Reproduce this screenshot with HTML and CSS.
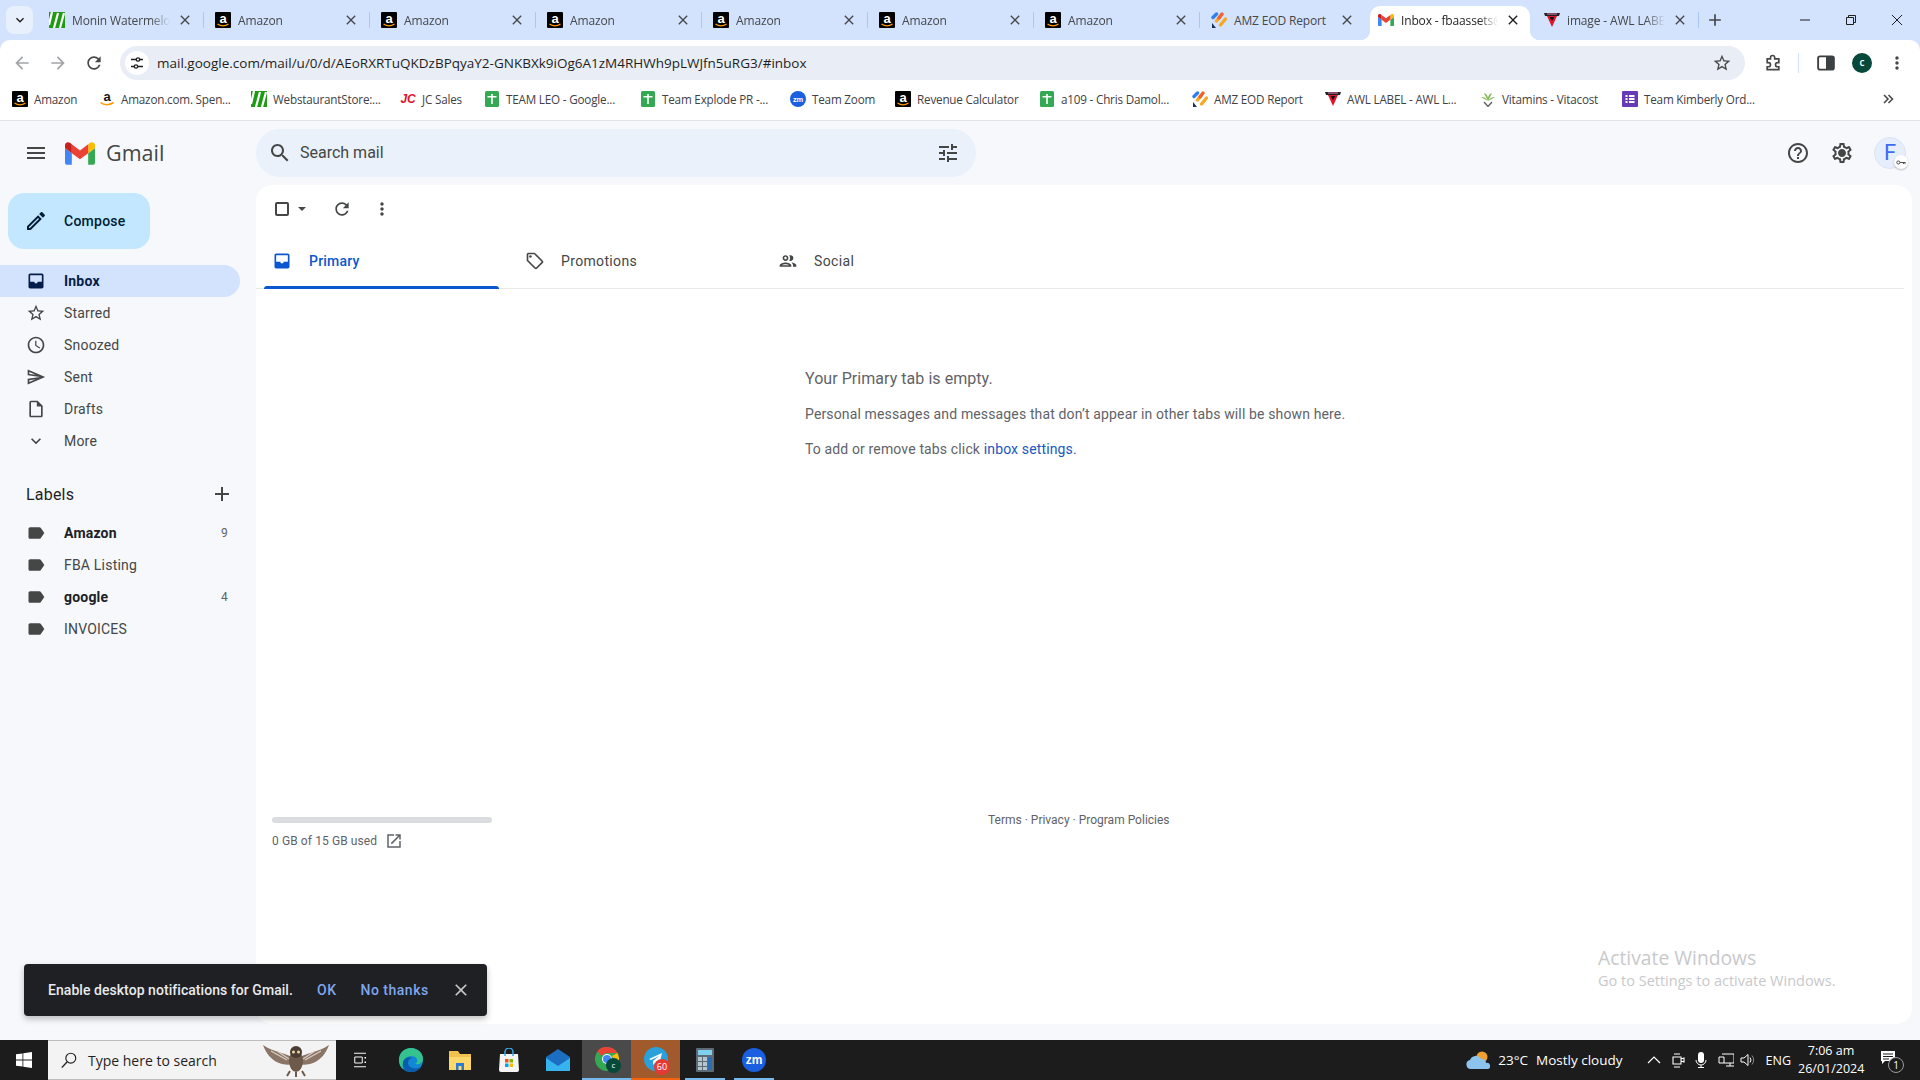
FILE: index.html
```html
<!DOCTYPE html>
<html lang="en">
<head>
    <meta charset="UTF-8">
    <meta name="viewport" content="width=device-width, initial-scale=1.0">
    <title>Inbox - Gmail</title>
    <link rel="stylesheet" href="styles.css">
</head>
<body>
    <!-- icon sprite -->
    <svg class="sprite" xmlns="http://www.w3.org/2000/svg">
        <symbol id="i-menu" viewBox="0 0 24 24"><path d="M3 18h18v-2H3v2zm0-5h18v-2H3v2zm0-7v2h18V6H3z"/></symbol>
        <symbol id="i-search" viewBox="0 0 24 24"><path d="M15.5 14h-.79l-.28-.27C15.41 12.59 16 11.11 16 9.5 16 5.91 13.09 3 9.5 3S3 5.91 3 9.5 5.91 16 9.5 16c1.61 0 3.09-.59 4.23-1.57l.27.28v.79l5 4.99L20.49 19l-4.99-5zm-6 0C7.01 14 5 11.99 5 9.5S7.01 5 9.5 5 14 7.01 14 9.5 11.99 14 9.5 14z"/></symbol>
        <symbol id="i-tune" viewBox="0 0 24 24"><path d="M3 17v2h6v-2H3zM3 5v2h10V5H3zm10 16v-2h8v-2h-8v-2h-2v6h2zM7 9v2H3v2h4v2h2V9H7zm14 4v-2H11v2h10zm-6-4h2V7h4V5h-4V3h-2v6z"/></symbol>
        <symbol id="i-help" viewBox="0 0 24 24"><path d="M11 18h2v-2h-2v2zm1-16C6.48 2 2 6.48 2 12s4.48 10 10 10 10-4.48 10-10S17.52 2 12 2zm0 18c-4.41 0-8-3.59-8-8s3.59-8 8-8 8 3.59 8 8-3.59 8-8 8zm0-14c-2.21 0-4 1.79-4 4h2c0-1.1.9-2 2-2s2 .9 2 2c0 2-3 1.75-3 5h2c0-2.25 3-2.5 3-5 0-2.21-1.79-4-4-4z"/></symbol>
        <symbol id="i-gear" viewBox="0 0 24 24"><path d="M19.43 12.98c.04-.32.07-.64.07-.98 0-.34-.03-.66-.07-.98l2.11-1.65c.19-.15.24-.42.12-.64l-2-3.46c-.09-.16-.26-.25-.44-.25-.06 0-.12.01-.17.03l-2.49 1c-.52-.4-1.08-.73-1.69-.98l-.38-2.65C14.46 2.18 14.25 2 14 2h-4c-.25 0-.46.18-.49.42l-.38 2.65c-.61.25-1.17.59-1.69.98l-2.49-1c-.06-.02-.12-.03-.18-.03-.17 0-.34.09-.43.25l-2 3.46c-.13.22-.07.49.12.64l2.11 1.65c-.04.32-.07.65-.07.98 0 .33.03.66.07.98l-2.11 1.65c-.19.15-.24.42-.12.64l2 3.46c.09.16.26.25.44.25.06 0 .12-.01.17-.03l2.49-1c.52.4 1.08.73 1.69.98l.38 2.65c.03.24.24.42.49.42h4c.25 0 .46-.18.49-.42l.38-2.65c.61-.25 1.17-.59 1.69-.98l2.49 1c.06.02.12.03.18.03.17 0 .34-.09.43-.25l2-3.46c.12-.22.07-.49-.12-.64l-2.11-1.65zm-1.98-1.71c.04.31.05.52.05.73 0 .21-.02.43-.05.73l-.14 1.13.89.7 1.08.84-.7 1.21-1.27-.51-1.04-.42-.9.68c-.43.32-.84.56-1.25.73l-1.06.43-.16 1.13-.2 1.35h-1.4l-.19-1.35-.16-1.13-1.06-.43c-.43-.18-.83-.41-1.23-.71l-.91-.7-1.06.43-1.27.51-.7-1.21 1.08-.84.89-.7-.14-1.13c-.03-.31-.05-.54-.05-.74s.02-.43.05-.73l.14-1.13-.89-.7-1.08-.84.7-1.21 1.27.51 1.04.42.9-.68c.43-.32.84-.56 1.25-.73l1.06-.43.16-1.13.2-1.35h1.39l.19 1.35.16 1.13 1.06.43c.43.18.83.41 1.23.71l.91.7 1.06-.43 1.27-.51.7 1.21-1.07.85-.89.7.14 1.13zM12 8c-2.21 0-4 1.79-4 4s1.79 4 4 4 4-1.79 4-4-1.79-4-4-4z"/></symbol>
        <symbol id="i-refresh" viewBox="0 0 24 24"><path d="M17.65 6.35C16.2 4.9 14.21 4 12 4c-4.42 0-7.99 3.58-7.99 8s3.57 8 7.99 8c3.73 0 6.84-2.55 7.73-6h-2.08c-.82 2.33-3.04 4-5.65 4-3.31 0-6-2.69-6-6s2.69-6 6-6c1.66 0 3.14.69 4.22 1.78L13 11h7V4l-2.35 2.35z"/></symbol>
        <symbol id="i-dots" viewBox="0 0 24 24"><path d="M12 8c1.1 0 2-.9 2-2s-.9-2-2-2-2 .9-2 2 .9 2 2 2zm0 2c-1.1 0-2 .9-2 2s.9 2 2 2 2-.9 2-2-.9-2-2-2zm0 6c-1.1 0-2 .9-2 2s.9 2 2 2 2-.9 2-2-.9-2-2-2z"/></symbol>
        <symbol id="i-inbox" viewBox="0 0 24 24"><path d="M19 3H5c-1.1 0-2 .9-2 2v14c0 1.1.9 2 2 2h14c1.1 0 2-.9 2-2V5c0-1.1-.9-2-2-2zm0 2v8h-5c0 1.1-.9 2-2 2s-2-.9-2-2H5V5h14z"/></symbol>
        <symbol id="i-star" viewBox="0 0 24 24"><path d="M22 9.24l-7.19-.62L12 2 9.19 8.63 2 9.24l5.46 4.73L5.82 21 12 17.27 18.18 21l-1.63-7.03L22 9.24zM12 15.4l-3.76 2.27 1-4.28-3.32-2.88 4.38-.38L12 6.1l1.71 4.04 4.38.38-3.32 2.88 1 4.28L12 15.4z"/></symbol>
        <symbol id="i-clock" viewBox="0 0 24 24"><path d="M11.99 2C6.47 2 2 6.48 2 12s4.47 10 9.99 10C17.52 22 22 17.52 22 12S17.52 2 11.99 2zM12 20c-4.42 0-8-3.58-8-8s3.58-8 8-8 8 3.58 8 8-3.58 8-8 8zm.5-13H11v6l5.25 3.15.75-1.23-4.5-2.67z"/></symbol>
        <symbol id="i-send" viewBox="0 0 24 24"><path d="M4.01 6.03l7.51 3.22-7.52-1 .01-2.22m7.5 8.72L4 17.97v-2.22l7.51-1M2.01 3L2 10l15 2-15 2 .01 7L23 12 2.01 3z"/></symbol>
        <symbol id="i-draft" viewBox="0 0 24 24"><path d="M14 2H6c-1.1 0-1.99.9-1.99 2L4 20c0 1.1.89 2 1.99 2H18c1.1 0 2-.9 2-2V8l-6-6zM6 20V4h7v5h5v11H6z"/></symbol>
        <symbol id="i-expand" viewBox="0 0 24 24"><path d="M16.59 8.59L12 13.17 7.41 8.59 6 10l6 6 6-6z"/></symbol>
        <symbol id="i-label" viewBox="0 0 24 24"><path d="M17.63 5.84C17.27 5.33 16.67 5 16 5L5 5.01C3.9 5.01 3 5.9 3 7v10c0 1.1.9 1.99 2 1.99L16 19c.67 0 1.27-.33 1.63-.84L22 12l-4.37-6.16z"/></symbol>
        <symbol id="i-add" viewBox="0 0 24 24"><path d="M19 13h-6v6h-2v-6H5v-2h6V5h2v6h6v2z"/></symbol>
        <symbol id="i-edit" viewBox="0 0 24 24"><path d="M3 17.25V21h3.75L17.81 9.94l-3.75-3.75L3 17.25zM5.92 19H5v-.92l9.06-9.06.92.92L5.92 19zM20.71 7.04c.39-.39.39-1.02 0-1.41l-2.34-2.34c-.2-.2-.45-.29-.71-.29s-.51.1-.7.29l-1.83 1.83 3.75 3.75 1.83-1.83z"/></symbol>
        <symbol id="i-tag" viewBox="0 0 24 24"><path d="M21.41 11.58l-9-9C12.05 2.22 11.55 2 11 2H4c-1.1 0-2 .9-2 2v7c0 .55.22 1.05.59 1.42l9 9c.36.36.86.58 1.41.58s1.05-.22 1.41-.59l7-7c.37-.36.59-.86.59-1.41s-.23-1.06-.59-1.42zM13 20.01L4 11V4h7v-.01l9 9-7 7.02z"/><circle cx="6.5" cy="6.5" r="1.5"/></symbol>
        <symbol id="i-people" viewBox="0 0 24 24"><path d="M9 13.75c-2.34 0-7 1.17-7 3.5V19h14v-1.75c0-2.33-4.66-3.5-7-3.5zM4.34 17c.84-.58 2.87-1.25 4.66-1.25s3.82.67 4.66 1.25H4.34zM9 12c1.93 0 3.5-1.57 3.5-3.5S10.93 5 9 5 5.5 6.57 5.5 8.5 7.07 12 9 12zm0-5c.83 0 1.5.67 1.5 1.5S9.83 10 9 10s-1.5-.67-1.5-1.5S8.17 7 9 7zm7.04 6.81c1.16.84 1.96 1.96 1.96 3.44V19h4v-1.75c0-2.02-3.5-3.17-5.96-3.44zM15 12c1.93 0 3.5-1.57 3.5-3.5S16.93 5 15 5c-.54 0-1.04.13-1.5.35.63.89 1 1.98 1 3.15s-.37 2.26-1 3.15c.46.22.96.35 1.5.35z"/></symbol>
        <symbol id="i-open" viewBox="0 0 24 24"><path d="M19 19H5V5h7V3H3v18h18v-9h-2v7zM14 3v2h3.59l-9.83 9.83 1.41 1.41L19 6.41V10h2V3h-7z"/></symbol>
        <symbol id="i-close" viewBox="0 0 24 24"><path d="M19 6.41L17.59 5 12 10.59 6.41 5 5 6.41 10.59 12 5 17.59 6.41 19 12 13.41 17.59 19 19 17.59 13.41 12z"/></symbol>
        <symbol id="i-back" viewBox="0 0 24 24"><path d="M20 11H7.83l5.59-5.59L12 4l-8 8 8 8 1.41-1.41L7.83 13H20v-2z"/></symbol>
        <symbol id="i-forward" viewBox="0 0 24 24"><path d="M12 4l-1.41 1.41L16.17 11H4v2h12.17l-5.58 5.59L12 20l8-8z"/></symbol>
        <symbol id="i-puzzle" viewBox="0 0 24 24"><path fill="none" stroke="currentColor" stroke-width="2" d="M5 7h4V5.5a2.5 2.5 0 0 1 5 0V7h5v4.5h-1.5a2.5 2.5 0 0 0 0 5H19V20H5v-3.5h1.5a2.5 2.5 0 0 0 0-5H5z"/></symbol>
        <symbol id="f-amazon" viewBox="0 0 16 16"><rect width="16" height="16" rx="1" fill="#000"/><text x="8" y="10.5" text-anchor="middle" class="fav-text" font-size="13" font-weight="700" fill="#fff">a</text><path d="M2.5 12c3.5 2.3 7.5 2.3 11 0" fill="none" stroke="#f90" stroke-width="1.3"/></symbol>
        <symbol id="f-amazon2" viewBox="0 0 16 16"><text x="8" y="10" text-anchor="middle" class="fav-text" font-size="13" font-weight="700" fill="#111">a</text><path d="M1.5 11.5c3.5 3 9 3 13 0" fill="none" stroke="#f90" stroke-width="1.6"/></symbol>
        <symbol id="f-web" viewBox="0 0 16 16"><rect width="16" height="16" fill="#1f9a15"/><path d="M0 13L3 0M5 16L9 1M11 16L15 1" fill="none" stroke="#fff" stroke-width="2.2"/></symbol>
        <symbol id="f-jc" viewBox="0 0 16 16"><text x="8" y="12" text-anchor="middle" class="fav-text" font-size="12" font-weight="700" font-style="italic" fill="#e0142a">JC</text></symbol>
        <symbol id="f-sheet" viewBox="0 0 16 16"><rect x="1" width="14" height="16" rx="1.5" fill="#34a853"/><path d="M3.5 5h9v1.5H8.8V13H7.2V6.5H3.500zM7.2 3h1.600v2H7.2z" fill="#fff"/></symbol>
        <symbol id="f-zoom" viewBox="0 0 16 16"><circle cx="8" cy="8" r="8" fill="#1a5fe0"/><text x="8" y="10.5" text-anchor="middle" class="fav-text" font-size="7.5" font-weight="700" fill="#fff">zm</text></symbol>
        <symbol id="f-eod" viewBox="0 0 16 16"><path d="M5.5 9L9 4.500M9.5 13l5-6" stroke="#f9a825" stroke-width="3.4" stroke-linecap="round"/><path d="M8 6l3-4" stroke="#f2622e" stroke-width="3.4" stroke-linecap="round"/><path d="M2 5.5L5.5 2" stroke="#2f80ed" stroke-width="3.4" stroke-linecap="round"/><path d="M1 16v-5l4 5z" fill="#16325c"/></symbol>
        <symbol id="f-awl" viewBox="0 0 16 16"><path d="M0 1h16l-1 3H1z" fill="#222"/><path d="M3 4h10l-5 11z" fill="#e3142c"/><path d="M5.5 5h5L8 9z" fill="#111"/><path d="M3 1.5h10v1H3z" fill="#e87bb0"/></symbol>
        <symbol id="f-vita" viewBox="0 0 16 16"><path d="M8 10L4 2c3 1 4.5 4 4 8zm0 0l4-8c-3 1-4.5 4-4 8zm0 0L1 6c2.5-.5 5 1 7 4zm0 0l7-4c-2.5-.5-5 1-7 4z" fill="#7ab648"/><path d="M4 11l4 4.5 4-4.5" fill="none" stroke="#555" stroke-width="1.2"/></symbol>
        <symbol id="f-forms" viewBox="0 0 16 16"><rect width="16" height="16" rx="1" fill="#673ab7"/><path d="M3.5 4h2v2h-2zM7 4h5.5v2H7zM3.5 7h2v2h-2zM7 7h5.5v2H7zM3.5 10h2v2h-2zM7 10h5.5v2H7z" fill="#fff"/></symbol>
        <symbol id="f-gmail" viewBox="52 42 88 66">
            <path fill="#4285f4" d="M58 108h14V74L52 59v43c0 3.32 2.69 6 6 6"/>
            <path fill="#34a853" d="M120 108h14c3.32 0 6-2.69 6-6V59l-20 15"/>
            <path fill="#fbbc04" d="M120 48v26l20-15v-8c0-7.42-8.47-11.65-14.4-7.2"/>
            <path fill="#ea4335" d="M72 74V48l24 18 24-18v26L96 92"/>
            <path fill="#c5221f" d="M52 51v8l20 15V48l-5.6-4.2c-5.94-4.45-14.4-.22-14.4 7.2"/>
        </symbol>
    </svg>

    <!-- browser tabs -->
    <div class="tabstrip">
        <button class="tab-search" type="button"><svg class="ic12" viewBox="0 0 24 24"><use href="#i-expand"/></svg></button>
        <div class="tab"><div class="tab-inner"><svg class="fav"><use href="#f-web"/></svg><span class="tab-title">Monin Watermelo</span><svg class="tab-x"><use href="#i-close"/></svg></div></div>
        <div class="tab"><div class="tab-inner"><svg class="fav"><use href="#f-amazon"/></svg><span class="tab-title">Amazon</span><svg class="tab-x"><use href="#i-close"/></svg></div></div>
        <div class="tab"><div class="tab-inner"><svg class="fav"><use href="#f-amazon"/></svg><span class="tab-title">Amazon</span><svg class="tab-x"><use href="#i-close"/></svg></div></div>
        <div class="tab"><div class="tab-inner"><svg class="fav"><use href="#f-amazon"/></svg><span class="tab-title">Amazon</span><svg class="tab-x"><use href="#i-close"/></svg></div></div>
        <div class="tab"><div class="tab-inner"><svg class="fav"><use href="#f-amazon"/></svg><span class="tab-title">Amazon</span><svg class="tab-x"><use href="#i-close"/></svg></div></div>
        <div class="tab"><div class="tab-inner"><svg class="fav"><use href="#f-amazon"/></svg><span class="tab-title">Amazon</span><svg class="tab-x"><use href="#i-close"/></svg></div></div>
        <div class="tab"><div class="tab-inner"><svg class="fav"><use href="#f-amazon"/></svg><span class="tab-title">Amazon</span><svg class="tab-x"><use href="#i-close"/></svg></div></div>
        <div class="tab tab-prev"><div class="tab-inner"><svg class="fav"><use href="#f-eod"/></svg><span class="tab-title tab-title-full">AMZ EOD Report</span><svg class="tab-x"><use href="#i-close"/></svg></div></div>
        <div class="tab tab-active"><div class="tab-inner"><svg class="fav"><use href="#f-gmail"/></svg><span class="tab-title">Inbox - fbaassets@</span><svg class="tab-x"><use href="#i-close"/></svg></div></div>
        <div class="tab"><div class="tab-inner"><svg class="fav"><use href="#f-awl"/></svg><span class="tab-title">image - AWL LABE</span><svg class="tab-x"><use href="#i-close"/></svg></div></div>
        <svg class="new-tab" viewBox="0 0 24 24"><use href="#i-add"/></svg>
        <div class="win-controls">
            <svg class="win-btn" viewBox="0 0 12 12"><path d="M1 6h10"/></svg>
            <svg class="win-btn" viewBox="0 0 12 12"><path d="M1.5 3.5h7v7h-7zM3.5 3.5v-2h7v7h-2"/></svg>
            <svg class="win-btn" viewBox="0 0 12 12"><path d="M1 1l10 10M11 1L1 11"/></svg>
        </div>
    </div>

    <!-- address bar -->
    <div class="toolbar">
        <svg class="tool-ic tool-dim"><use href="#i-back"/></svg>
        <svg class="tool-ic tool-dim"><use href="#i-forward"/></svg>
        <svg class="tool-ic"><use href="#i-refresh"/></svg>
        <div class="omnibox">
            <span class="site-info"><svg viewBox="0 0 16 16" class="site-ic"><path d="M2 4.5h5M10.500 4.5h3.5M2 11.5h3.5M9 11.5h5" fill="none" stroke="#1f1f1f" stroke-width="1.5"/><circle cx="9" cy="4.5" r="1.7" fill="none" stroke="#1f1f1f" stroke-width="1.3"/><circle cx="7" cy="11.5" r="1.7" fill="none" stroke="#1f1f1f" stroke-width="1.3"/></svg></span>
            <span class="url">mail.google.com/mail/u/0/d/AEoRXRTuQKDzBPqyaY2-GNKBXk9iOg6A1zM4RHWh9pLWJfn5uRG3/#inbox</span>
            <svg class="tool-ic star"><use href="#i-star"/></svg>
        </div>
        <svg class="tool-ic ext"><use href="#i-puzzle"/></svg>
        <span class="tool-sep"></span>
        <svg class="side-panel" viewBox="0 0 16 16"><rect x="1.7" y="2.7" width="12.6" height="10.6" rx="1.5" fill="none" stroke="#3c4043" stroke-width="1.5"/><rect x="8" y="2.7" width="6" height="10.6" fill="#3c4043"/></svg>
        <span class="chrome-avatar">c</span>
        <svg class="tool-ic"><use href="#i-dots"/></svg>
    </div>

    <!-- bookmarks bar -->
    <div class="bookmarks">
        <div class="bm"><svg class="fav"><use href="#f-amazon"/></svg>Amazon</div>
        <div class="bm"><svg class="fav"><use href="#f-amazon2"/></svg>Amazon.com. Spen...</div>
        <div class="bm"><svg class="fav"><use href="#f-web"/></svg>WebstaurantStore:...</div>
        <div class="bm"><svg class="fav"><use href="#f-jc"/></svg>JC Sales</div>
        <div class="bm"><svg class="fav"><use href="#f-sheet"/></svg>TEAM LEO - Google...</div>
        <div class="bm"><svg class="fav"><use href="#f-sheet"/></svg>Team Explode PR -...</div>
        <div class="bm"><svg class="fav"><use href="#f-zoom"/></svg>Team Zoom</div>
        <div class="bm"><svg class="fav"><use href="#f-amazon"/></svg>Revenue Calculator</div>
        <div class="bm"><svg class="fav"><use href="#f-sheet"/></svg>a109 - Chris Damol...</div>
        <div class="bm"><svg class="fav"><use href="#f-eod"/></svg>AMZ EOD Report</div>
        <div class="bm"><svg class="fav"><use href="#f-awl"/></svg>AWL LABEL - AWL L...</div>
        <div class="bm"><svg class="fav"><use href="#f-vita"/></svg>Vitamins - Vitacost</div>
        <div class="bm"><svg class="fav"><use href="#f-forms"/></svg>Team Kimberly Ord...</div>
        <svg class="bm-more" viewBox="0 0 12 12"><path d="M2 2l4 4-4 4M6.5 2l4 4-4 4" fill="none" stroke="#444" stroke-width="1.5"/></svg>
    </div>

    <!-- gmail -->
    <div class="gmail">
        <aside class="sidebar">
            <div class="brand">
                <svg class="ic24 grey"><use href="#i-menu"/></svg>
                <svg class="gmail-logo"><use href="#f-gmail"/></svg>
                <span class="brand-name">Gmail</span>
            </div>
            <div class="compose"><svg class="ic24 dark"><use href="#i-edit"/></svg>Compose</div>

            <nav class="nav">
                <div class="nav-row nav-current"><svg class="ic20"><use href="#i-inbox"/></svg>Inbox</div>
                <div class="nav-row"><svg class="ic20"><use href="#i-star"/></svg>Starred</div>
                <div class="nav-row"><svg class="ic20"><use href="#i-clock"/></svg>Snoozed</div>
                <div class="nav-row"><svg class="ic20"><use href="#i-send"/></svg>Sent</div>
                <div class="nav-row"><svg class="ic20"><use href="#i-draft"/></svg>Drafts</div>
                <div class="nav-row"><svg class="ic20"><use href="#i-expand"/></svg>More</div>
            </nav>

            <div class="labels-head"><span>Labels</span><svg class="ic20"><use href="#i-add"/></svg></div>
            <div class="nav-row nav-unread"><svg class="ic20"><use href="#i-label"/></svg>Amazon<span class="count">9</span></div>
            <div class="nav-row"><svg class="ic20"><use href="#i-label"/></svg>FBA Listing</div>
            <div class="nav-row nav-unread"><svg class="ic20"><use href="#i-label"/></svg>google<span class="count">4</span></div>
            <div class="nav-row"><svg class="ic20"><use href="#i-label"/></svg>INVOICES</div>
        </aside>

        <div class="content">
            <header class="topbar">
                <div class="searchbox">
                    <svg class="ic24 grey"><use href="#i-search"/></svg>
                    <span class="search-text">Search mail</span>
                    <svg class="ic24 grey tune"><use href="#i-tune"/></svg>
                </div>
                <div class="top-icons">
                    <svg class="ic24 grey"><use href="#i-help"/></svg>
                    <svg class="ic24 grey"><use href="#i-gear"/></svg>
                    <div class="avatar">F<span class="avatar-key"><svg viewBox="0 0 14 8" class="key"><circle cx="3" cy="4" r="2" fill="none" stroke="#444" stroke-width="1.2"/><path d="M5 4h7M9.5 4v2M11.5 4v2" stroke="#444" stroke-width="1.2"/></svg></span></div>
                </div>
            </header>

            <main class="panel">
                <div class="mail-tools">
                    <span class="checkbox"></span>
                    <span class="caret"></span>
                    <svg class="ic20 refresh"><use href="#i-refresh"/></svg>
                    <svg class="ic20 more"><use href="#i-dots"/></svg>
                </div>

                <div class="mail-tabs">
                    <div class="mail-tab mail-tab-on"><svg class="ic20"><use href="#i-inbox"/></svg>Primary</div>
                    <div class="mail-tab"><svg class="ic20"><use href="#i-tag"/></svg>Promotions</div>
                    <div class="mail-tab"><svg class="ic20"><use href="#i-people"/></svg>Social</div>
                </div>

                <section class="empty">
                    <p class="empty-title">Your Primary tab is empty.</p>
                    <p class="empty-line">Personal messages and messages that don’t appear in other tabs will be shown here.</p>
                    <p class="empty-line">To add or remove tabs click <span class="link">inbox settings.</span></p>
                </section>

                <footer class="panel-foot">
                    <div class="storage">
                        <div class="storage-bar"></div>
                        <div class="storage-text">0 GB of 15 GB used <svg class="ic16"><use href="#i-open"/></svg></div>
                    </div>
                    <div class="policies">Terms · Privacy · Program Policies</div>
                </footer>
            </main>
        </div>

        <div class="snackbar">
            <span class="snack-msg">Enable desktop notifications for Gmail.</span>
            <span class="snack-btn">OK</span>
            <span class="snack-btn">No thanks</span>
            <svg class="snack-x"><use href="#i-close"/></svg>
        </div>

        <div class="watermark">
            <div class="wm-title">Activate Windows</div>
            <div class="wm-sub">Go to Settings to activate Windows.</div>
        </div>
    </div>

    <!-- windows taskbar -->
    <div class="taskbar">
        <svg class="start" viewBox="0 0 16 16"><path d="M0 2.3l6.5-.9v6.200H0zM7.3 1.300L16 0v7.600H7.3zM0 8.400h6.500v6.200L0 13.700zM7.3 8.400H16V16l-8.700-1.300z" fill="#fff"/></svg>
        <div class="win-search">
            <svg class="win-search-ic" viewBox="0 0 20 20"><circle cx="12" cy="8" r="5.5" fill="none" stroke="#222" stroke-width="1.3"/><path d="M8 12l-6 6.5" stroke="#222" stroke-width="1.5"/></svg>
            <span>Type here to search</span>
            <svg class="owl" viewBox="0 0 66 34">
                <path d="M33 16C24 10 12 10 0 2c3 8 8 15 16 18 5 2 10 2 14 1z" fill="#8a7566"/>
                <path d="M33 16c9-6 21-6 33-14-3 8-8 15-16 18-5 2-10 2-14 1z" fill="#8a7566"/>
                <path d="M8 8l16 9M14 8l12 8M58 8l-16 9M52 8l-12 8" stroke="#d8cfc6" stroke-width="1.2"/>
                <ellipse cx="33" cy="18" rx="7" ry="11" fill="#6e5a4a"/>
                <circle cx="33" cy="9" r="6" fill="#4a3d33"/>
                <circle cx="30.5" cy="9" r="1.5" fill="#e8d9a0"/>
                <circle cx="35.5" cy="9" r="1.5" fill="#e8d9a0"/>
                <path d="M27 28l-3 5M33 29v5M39 28l3 5" stroke="#6e5a4a" stroke-width="2"/>
            </svg>
        </div>

        <div class="task-apps">
            <div class="app app-view"><svg class="app-ic" viewBox="0 0 24 24"><path d="M4 3h16M4 21h16M5 8h10v8H5z" fill="none" stroke="#fff" stroke-width="1.3"/><path d="M18 8h2v2h-2zM18 14h2v2h-2z" fill="#fff"/></svg></div>
            <div class="app"><svg class="app-ic" viewBox="0 0 24 24"><circle cx="12" cy="12" r="12" fill="#1287d4"/><path d="M12 0c7 0 12 5 12 11 0 4-4 6-8 5 2-1 3-3 2-5-2-4-9-4-12 0-2 3-3 6-2 10-3-2-4-6-4-9C0 5 5 0 12 0z" fill="#34c38f"/><path d="M12 24c-5 0-9-4-8-10 1-4 6-6 9-4-4 1-5 5-3 8 3 3 8 3 12 1-2 3-6 5-10 5z" fill="#0b5cad"/></svg></div>
            <div class="app"><svg class="app-ic" viewBox="0 0 24 24"><path d="M1 3h9l2 3h11v16H1z" fill="#f2c14e"/><path d="M1 9h22v13H1z" fill="#ffd86b"/><path d="M8 22v-7h8v7h-2.5v-4h-3v4z" fill="#2a7bd4"/></svg></div>
            <div class="app"><svg class="app-ic" viewBox="0 0 24 24"><path d="M3 6h18l1 16a2 2 0 0 1-2 2H4a2 2 0 0 1-2-2z" fill="#f4f4f4"/><path d="M8 8V4a4 4 0 0 1 8 0v4" fill="none" stroke="#35a7e8" stroke-width="1.5"/><path d="M8 11h3.5v3.5H8z" fill="#f25022"/><path d="M12.5 11H16v3.5h-3.5z" fill="#7fba00"/><path d="M8 15.5h3.5V19H8z" fill="#00a4ef"/><path d="M12.5 15.5H16V19h-3.5z" fill="#ffb900"/></svg></div>
            <div class="app"><svg class="app-ic" viewBox="0 0 24 24"><path d="M12 1l12 8v14H0V9z" fill="#1b6ec2"/><path d="M0 10l12 8 12-8v13H0z" fill="#35b4f0"/></svg></div>
            <div class="app app-chrome">
                <svg class="app-ic" viewBox="0 0 24 24"><circle cx="12" cy="12" r="12" fill="#34a853"/><path d="M12 0a12 12 0 0 1 10.4 6H12a6 6 0 0 0-5.5 3.5L2.5 4A12 12 0 0 1 12 0z" fill="#ea4335"/><path d="M22.4 6a12 12 0 0 1-9 18l4-8a6 6 0 0 0-.5-7z" fill="#fbbc04"/><circle cx="12" cy="12" r="5" fill="#fff"/><circle cx="12" cy="12" r="4" fill="#4285f4"/></svg>
                <span class="app-badge-c">c</span>
            </div>
            <div class="app app-telegram">
                <svg class="app-ic" viewBox="0 0 24 24"><circle cx="12" cy="12" r="12" fill="#2aa1da"/><path d="M5 12l13-6-3 13-4-3-2 2v-4l6-5-8 4z" fill="#fff"/></svg>
                <span class="app-badge-n">60</span>
            </div>
            <div class="app app-run"><svg class="app-ic" viewBox="0 0 24 24"><rect x="3" width="18" height="24" rx="1" fill="#5d6b75"/><rect x="5" y="2" width="14" height="5" fill="#7fd0ee"/><path d="M5 9h4v4H5zM10 9h4v4h-4zM5 14h4v4H5zM10 14h4v4h-4zM5 19h4v3H5zM10 19h4v3h-4z" fill="#b8c4cc"/><path d="M15 9h4v13h-4z" fill="#2a6db5"/></svg></div>
            <div class="app app-run"><svg class="app-ic" viewBox="0 0 24 24"><circle cx="12" cy="12" r="12" fill="#1a5fe0"/><text x="12" y="16" text-anchor="middle" class="fav-text" font-size="12" font-weight="700" fill="#fff">zm</text></svg></div>
        </div>

        <div class="tray">
            <svg class="weather" viewBox="0 0 24 18"><circle cx="16" cy="6" r="5.5" fill="#f0a030"/><path d="M5 18a4.5 4.5 0 0 1-1-8.900A6 6 0 0 1 15 8a4 4 0 0 1 5 4 3 3 0 0 1 2 6z" fill="#8cc4ee"/></svg>
            <span class="temp">23°C</span>
            <span class="cond">Mostly cloudy</span>
            <svg class="tray-ic tray-chevron" viewBox="0 0 16 16"><path d="M2 11l6-6 6 6" fill="none" stroke="#fff" stroke-width="1.2"/></svg>
            <svg class="tray-ic" viewBox="0 0 16 16"><path d="M3 5h8v7H3zM11 7l3-1v4l-3-1M4 2h6M4 15h6" fill="none" stroke="#fff" stroke-width="1.1"/></svg>
            <svg class="tray-ic tray-mic" viewBox="0 0 16 16"><rect x="5" y="0" width="6" height="11" rx="3" fill="#fff"/><path d="M3 8a5 5 0 0 0 10 0M8 13v2M5 15.5h6" fill="none" stroke="#fff" stroke-width="1"/></svg>
            <svg class="tray-ic tray-net" viewBox="0 0 16 16"><path d="M4 2h12v9H6M1 5h5v6H1zM8 14h8M12 11v3" fill="none" stroke="#fff" stroke-width="1"/></svg>
            <svg class="tray-ic" viewBox="0 0 16 16"><path d="M1 6h3l4-3.500v11L4 10H1zM10 5.500a4 4 0 0 1 0 5" fill="none" stroke="#fff" stroke-width="1"/><path d="M12 3.5a7 7 0 0 1 0 9" fill="none" stroke="#888" stroke-width="1"/></svg>
            <span class="lang">ENG</span>
            <div class="clock"><div>7:06 am</div><div>26/01/2024</div></div>
            <div class="notif">
                <svg viewBox="0 0 16 16" class="notif-ic"><path d="M1 1h14v10H5l-3 3v-3H1z" fill="#fff"/><path d="M3 4h10M3 6.5h10M3 9h6" stroke="#1c1c1c"/></svg>
                <span class="notif-n">1</span>
            </div>
        </div>
    </div>
</body>
</html>
```

FILE: styles.css
```css
* {
    box-sizing: border-box;
}
html, body {
    margin: 0;
    height: 100%;
}
body {
    width: 1920px;
    height: 1080px;
    overflow: hidden;
    display: flex;
    flex-direction: column;
    background: #d3e3fd;
    font-family: Roboto, Arial, sans-serif;
    color: #444746;
}
p {
    margin: 0;
}
svg {
    flex: none;
    fill: currentColor;
}
.sprite {
    display: none;
}
.fav-text {
    font-family: "Liberation Sans", Arial, sans-serif;
}

/* browser tabs */
.tabstrip {
    height: 40px;
    flex: none;
    display: flex;
    align-items: flex-start;
    padding-left: 6px;
    font-family: "Open Sans", Arial, sans-serif;
    font-size: 12px;
    letter-spacing: -0.15px;
    color: #45474a;
}
.tab-search {
    width: 27px;
    height: 28px;
    margin: 6px 5px 0 0;
    padding: 0;
    border: none;
    border-radius: 8px;
    background: #e9f0fd;
    color: #1f1f1f;
    display: flex;
    align-items: center;
    justify-content: center;
}
.ic12 {
    width: 16px;
    height: 16px;
}
.tab {
    width: 166px;
    height: 34px;
    margin-top: 6px;
    position: relative;
}
.tab-inner {
    height: 16px;
    margin-top: 6px;
    padding: 0 10px 0 11px;
    display: flex;
    align-items: center;
    gap: 7px;
    border-right: 1px solid #a8c7fa;
}
.tab-prev .tab-inner {
    border-right-color: transparent;
}
.tab-title {
    flex: 1;
    min-width: 0;
    white-space: nowrap;
    -webkit-mask-image: linear-gradient(to right, #000 80%, transparent);
    mask-image: linear-gradient(to right, #000 80%, transparent);
}
.tab-title-full {
    -webkit-mask-image: none;
    mask-image: none;
}
.tab-x {
    width: 16px;
    height: 16px;
    color: #45474a;
}
.fav {
    width: 16px;
    height: 16px;
}
.tab-active {
    width: 160px;
    margin-left: 4px;
    margin-right: 3px;
    background: #fff;
    border-radius: 10px 10px 0 0;
    color: #1f1f1f;
}
.tab-active .tab-inner {
    padding: 0 8px 0 8px;
    border-right-color: transparent;
}
.tab-active .tab-x {
    color: #1f1f1f;
}
.tab-active::before,
.tab-active::after {
    content: "";
    position: absolute;
    bottom: 0;
    width: 10px;
    height: 10px;
}
.tab-active::before {
    left: -10px;
    background: radial-gradient(circle at 0 0, transparent 10px, #fff 10.5px);
}
.tab-active::after {
    right: -10px;
    background: radial-gradient(circle at 100% 0, transparent 10px, #fff 10.5px);
}
.new-tab {
    width: 20px;
    height: 20px;
    margin: 10px 0 0 6px;
    color: #45474a;
}
.win-controls {
    margin-left: auto;
    display: flex;
    padding-top: 14px;
    margin-right: 17px;
    gap: 34px;
}
.win-btn {
    width: 12px;
    height: 12px;
    fill: none;
    stroke: #1f1f1f;
    stroke-width: 1;
}

/* address bar */
.toolbar {
    height: 40px;
    flex: none;
    background: #fff;
    border-radius: 10px 10px 0 0;
    display: flex;
    align-items: flex-end;
    padding-left: 12px;
    font-family: "Open Sans", Arial, sans-serif;
}
.tool-ic {
    width: 20px;
    height: 20px;
    margin: 0 8px 7px;
    color: #474747;
}
.toolbar > .tool-ic:first-child {
    margin-left: 0;
}
.tool-dim {
    color: #a3a5a8;
}
.omnibox {
    width: 1625px;
    height: 34px;
    flex: none;
    margin-left: 8px;
    border-radius: 17px;
    background: #e9eef6;
    display: flex;
    align-items: center;
    padding-left: 5px;
    font-size: 13.5px;
    color: #1f1f1f;
}
.site-info {
    width: 24px;
    height: 24px;
    border-radius: 50%;
    background: #fff;
    display: flex;
    align-items: center;
    justify-content: center;
}
.site-ic {
    width: 16px;
    height: 16px;
}
.url {
    margin-left: 8px;
    flex: 1;
    white-space: nowrap;
}
.star {
    margin: 0 13px 0 0;
}
.ext {
    margin: 0 0 7px 18px;
}
.tool-sep {
    width: 1px;
    height: 20px;
    margin: 0 17px 7px 15px;
    background: #d3e3fd;
    flex: none;
}
.side-panel {
    width: 20px;
    height: 20px;
    margin: 0 16px 7px 0;
}
.chrome-avatar {
    width: 20px;
    height: 20px;
    flex: none;
    margin: 0 7px 7px 0;
    border-radius: 50%;
    background: #06483a;
    color: #fff;
    font-size: 10px;
    line-height: 18px;
    text-align: center;
    font-weight: 600;
}

/* bookmarks bar */
.bookmarks {
    height: 41px;
    flex: none;
    background: #fff;
    border-bottom: 1px solid #e3e3e3;
    padding: 0 0 2px 12px;
    display: grid;
    grid-template-columns: 87px 152px 149px 84px 156px 150px 105px 144px 153px 133px 155px 142px 260px 12px;
    align-items: center;
    font-family: "Open Sans", Arial, sans-serif;
    font-size: 11.7px;
    letter-spacing: -0.2px;
    color: #3f4145;
}
.bm {
    display: flex;
    align-items: center;
    gap: 6px;
    white-space: nowrap;
}
.bm-more {
    width: 12px;
    height: 12px;
}

/* gmail */
.gmail {
    flex: 1;
    min-height: 0;
    display: flex;
    position: relative;
    background: #f6f8fc;
}
.sidebar {
    width: 256px;
    flex: none;
    font-size: 14px;
    letter-spacing: 0.2px;
}
.brand {
    height: 64px;
    display: flex;
    align-items: center;
    padding-left: 24px;
}
.ic24 {
    width: 24px;
    height: 24px;
}
.ic20 {
    width: 20px;
    height: 20px;
}
.ic16 {
    width: 18px;
    height: 18px;
}
.grey {
    color: #444746;
}
.dark {
    color: #001d35;
}
.gmail-logo {
    width: 30px;
    height: 23px;
    margin-left: 17px;
}
.brand-name {
    margin: -2px 0 0 11px;
    font-family: "Open Sans", Arial, sans-serif;
    font-size: 21.5px;
    letter-spacing: 0;
    color: #444746;
}
.compose {
    width: 142px;
    height: 56px;
    margin: 8px 0 0 8px;
    border-radius: 16px;
    background: #c2e7ff;
    color: #001d35;
    font-weight: 500;
    letter-spacing: 0.25px;
    display: flex;
    align-items: center;
    gap: 16px;
    padding-left: 16px;
}
.nav {
    margin-top: 16px;
}
.nav-row {
    width: 240px;
    height: 32px;
    display: flex;
    align-items: center;
    gap: 18px;
    padding: 0 12px 0 26px;
    border-radius: 0 16px 16px 0;
    color: #444746;
}
.nav-current {
    background: #d3e3fd;
    color: #041e49;
    font-weight: 700;
}
.nav-unread {
    color: #202124;
    font-weight: 700;
}
.nav-unread svg {
    color: #444746;
}
.count {
    margin-left: auto;
    font-size: 12px;
    font-weight: 400;
    color: #5f6368;
}
.labels-head {
    width: 240px;
    height: 32px;
    margin: 21px 0 7px;
    padding: 0 6px 0 26px;
    display: flex;
    align-items: center;
    justify-content: space-between;
    font-size: 16px;
    color: #1f1f1f;
}
.labels-head svg {
    width: 24px;
    height: 24px;
    color: #444746;
}
.content {
    flex: 1;
    min-width: 0;
    display: flex;
    flex-direction: column;
}
.topbar {
    height: 64px;
    flex: none;
    padding-top: 8px;
    display: flex;
    align-items: flex-start;
}
.searchbox {
    width: 720px;
    height: 48px;
    border-radius: 24px;
    background: #eaf1fb;
    display: flex;
    align-items: center;
    padding: 0 16px 0 12px;
}
.search-text {
    margin-left: 8px;
    flex: 1;
    font-size: 16px;
    color: #444746;
    position: relative;
    top: -1px;
}
.top-icons {
    margin-left: auto;
    display: flex;
    align-items: center;
    gap: 20px;
    height: 32px;
    margin-top: 8px;
    margin-right: 14px;
}
.avatar {
    width: 32px;
    height: 32px;
    border-radius: 50%;
    background: #e6eefc;
    border: 1px solid #dde3f0;
    color: #3d6cf0;
    font-size: 22px;
    line-height: 30px;
    text-align: center;
    position: relative;
}
.avatar-key {
    position: absolute;
    right: -3px;
    bottom: -1px;
    width: 14px;
    height: 14px;
    border-radius: 50%;
    background: #fff;
    display: flex;
    align-items: center;
    justify-content: center;
    box-shadow: 0 1px 2px rgba(0, 0, 0, 0.25);
}
.key {
    width: 11px;
    height: 7px;
}
.panel {
    flex: 1;
    min-height: 0;
    margin: 0 8px 16px 0;
    border-radius: 16px;
    background: #fff;
    display: flex;
    flex-direction: column;
}
.mail-tools {
    height: 48px;
    flex: none;
    display: flex;
    align-items: center;
    padding-left: 19px;
}
.checkbox {
    width: 14px;
    height: 14px;
    border: 2px solid #444746;
    border-radius: 2px;
}
.caret {
    width: 0;
    height: 0;
    margin-left: 9px;
    border-left: 4px solid transparent;
    border-right: 4px solid transparent;
    border-top: 4px solid #444746;
}
.refresh {
    margin-left: 26px;
    color: #444746;
}
.more {
    margin-left: 20px;
    color: #444746;
}
.mail-tabs {
    height: 56px;
    flex: none;
    margin-right: 8px;
    padding-left: 8px;
    border-bottom: 1px solid #e7e8ea;
    display: flex;
    font-size: 14px;
    letter-spacing: 0.35px;
    color: #444746;
}
.mail-tab {
    width: 252px;
    display: flex;
    align-items: center;
    gap: 16px;
    padding-left: 9px;
    position: relative;
}
.mail-tab:last-child {
    padding-left: 10px;
}
.mail-tab-on {
    color: #0b57d0;
    font-weight: 500;
    letter-spacing: 0.2px;
    gap: 17px;
    padding-left: 8px;
}
.mail-tab-on::after {
    content: "";
    position: absolute;
    left: 0;
    bottom: -1px;
    width: 235px;
    height: 3px;
    border-radius: 3px 3px 0 0;
    background: #0b57d0;
}
.empty {
    flex: 1;
    min-height: 0;
    padding: 78px 0 0 549px;
    font-size: 14px;
    letter-spacing: 0.14px;
    color: #5f6368;
}
.empty-title {
    font-size: 16px;
    line-height: 24px;
    letter-spacing: 0.05px;
    margin-bottom: 13px;
}
.empty-line {
    line-height: 20px;
    margin-bottom: 15px;
}
.link {
    color: #1a56c4;
}
.panel-foot {
    height: 211px;
    flex: none;
    padding: 4px 0 0 16px;
    display: flex;
    align-items: flex-start;
    font-size: 12px;
    color: #5f6368;
}
.storage {
    width: 220px;
}
.storage-bar {
    height: 6px;
    border-radius: 3px;
    background: #dadce0;
}
.storage-text {
    margin-top: 9px;
    display: flex;
    align-items: center;
    gap: 8px;
    letter-spacing: 0.1px;
}
.policies {
    margin: -4px 0 0 496px;
    line-height: 14px;
}
.snackbar {
    position: absolute;
    left: 24px;
    top: 843px;
    width: 463px;
    height: 52px;
    border-radius: 4px;
    background: #1f2023;
    box-shadow: 0 3px 6px rgba(0, 0, 0, 0.25);
    display: flex;
    align-items: center;
    padding-left: 24px;
    font-size: 14px;
    color: #e8eaed;
}
.snack-msg {
    width: 269px;
    font-weight: 500;
    letter-spacing: 0.05px;
}
.snack-btn {
    color: #7fa6ec;
    font-weight: 500;
    letter-spacing: 0.5px;
    margin-right: 24px;
}
.snack-x {
    width: 20px;
    height: 20px;
    margin-left: -2px;
    color: #c4c7c5;
}
.watermark {
    position: absolute;
    left: 1598px;
    top: 824px;
    font-family: "Open Sans", Arial, sans-serif;
    color: #c8c9cb;
}
.wm-title {
    font-size: 19.3px;
    line-height: 26px;
}
.wm-sub {
    font-size: 14.5px;
    line-height: 20px;
}

/* windows taskbar */
.taskbar {
    height: 40px;
    flex: none;
    background: #1c1c1c;
    display: flex;
    align-items: center;
    font-family: "Open Sans", Arial, sans-serif;
    color: #fff;
    font-size: 13.5px;
}
.start {
    width: 16px;
    height: 16px;
    margin: 0 16px;
}
.win-search {
    width: 288px;
    height: 40px;
    background: #f3f3f3;
    border: 1px solid #bdbdbd;
    border-width: 1px 0;
    display: flex;
    align-items: center;
    padding-left: 12px;
    color: #1f1f1f;
    font-size: 14px;
}
.win-search-ic {
    width: 18px;
    height: 18px;
    margin-right: 10px;
}
.owl {
    width: 66px;
    height: 34px;
    margin-left: auto;
    margin-right: 7px;
}
.task-apps {
    display: flex;
    align-items: stretch;
    height: 40px;
    margin-left: 1px;
}
.app {
    width: 49px;
    height: 40px;
    display: flex;
    align-items: center;
    justify-content: center;
    position: relative;
}
.app-ic {
    width: 24px;
    height: 24px;
}
.app-view .app-ic {
    width: 18px;
    margin-right: 3px;
}
.app-run {
    background: linear-gradient(#76b9ed, #76b9ed) center bottom / 40px 2px no-repeat;
}
.app-chrome {
    background: #4a4a4a;
    border-bottom: 2px solid #76b9ed;
}
.app-telegram {
    background: #a05a2c;
    border-bottom: 2px solid #f7630c;
}
.app-badge-c {
    position: absolute;
    right: 10px;
    bottom: 5px;
    width: 15px;
    height: 15px;
    border-radius: 50%;
    background: #06483a;
    font-size: 8px;
    line-height: 14px;
    text-align: center;
}
.app-badge-n {
    position: absolute;
    right: 10px;
    bottom: 3px;
    width: 16px;
    height: 16px;
    border-radius: 50%;
    background: #e53935;
    font-size: 9px;
    line-height: 16px;
    text-align: center;
}
.tray {
    margin-left: auto;
    display: flex;
    align-items: center;
    height: 40px;
    padding-right: 16px;
}
.weather {
    width: 24px;
    height: 18px;
}
.temp {
    margin-left: 8px;
}
.cond {
    margin: 0 23px 0 8px;
}
.tray-ic {
    width: 16px;
    height: 16px;
    margin-right: 7px;
}
.tray-chevron {
    margin-right: 8px;
}
.tray-mic {
    margin-right: 9px;
}
.tray-net {
    margin-right: 6px;
}
.lang {
    margin-left: 3px;
    font-size: 12.5px;
}
.clock {
    width: 66px;
    margin-left: 7px;
    font-size: 12.5px;
    line-height: 18px;
    text-align: center;
}
.notif {
    margin-left: 16px;
    width: 24px;
    height: 26px;
    position: relative;
}
.notif-ic {
    width: 16px;
    height: 16px;
    margin-top: 3px;
}
.notif-n {
    position: absolute;
    right: 0;
    bottom: 0;
    width: 16px;
    height: 16px;
    border-radius: 50%;
    border: 1px solid #999;
    background: #1c1c1c;
    font-size: 10px;
    line-height: 14px;
    text-align: center;
}
```
